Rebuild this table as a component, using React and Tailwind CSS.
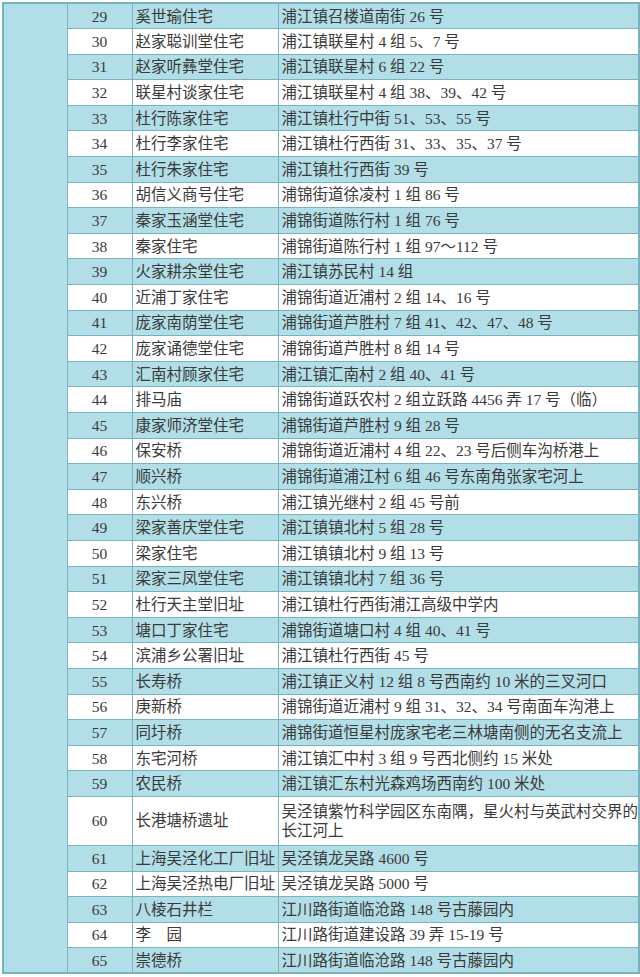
import React from "react";

const rows = [
  ["29", "奚世瑜住宅", "浦江镇召楼道南街 26 号"],
  ["30", "赵家聪训堂住宅", "浦江镇联星村 4 组 5、7 号"],
  ["31", "赵家听彝堂住宅", "浦江镇联星村 6 组 22 号"],
  ["32", "联星村谈家住宅", "浦江镇联星村 4 组 38、39、42 号"],
  ["33", "杜行陈家住宅", "浦江镇杜行中街 51、53、55 号"],
  ["34", "杜行李家住宅", "浦江镇杜行西街 31、33、35、37 号"],
  ["35", "杜行朱家住宅", "浦江镇杜行西街 39 号"],
  ["36", "胡信义商号住宅", "浦锦街道徐凌村 1 组 86 号"],
  ["37", "秦家玉涵堂住宅", "浦锦街道陈行村 1 组 76 号"],
  ["38", "秦家住宅", "浦锦街道陈行村 1 组 97～112 号"],
  ["39", "火家耕余堂住宅", "浦江镇苏民村 14 组"],
  ["40", "近浦丁家住宅", "浦锦街道近浦村 2 组 14、16 号"],
  ["41", "庞家南荫堂住宅", "浦锦街道芦胜村 7 组 41、42、47、48 号"],
  ["42", "庞家诵德堂住宅", "浦锦街道芦胜村 8 组 14 号"],
  ["43", "汇南村顾家住宅", "浦江镇汇南村 2 组 40、41 号"],
  ["44", "排马庙", "浦锦街道跃农村 2 组立跃路 4456 弄 17 号（临）"],
  ["45", "康家师济堂住宅", "浦锦街道芦胜村 9 组 28 号"],
  ["46", "保安桥", "浦锦街道近浦村 4 组 22、23 号后侧车沟桥港上"],
  ["47", "顺兴桥", "浦锦街道浦江村 6 组 46 号东南角张家宅河上"],
  ["48", "东兴桥", "浦江镇光继村 2 组 45 号前"],
  ["49", "梁家善庆堂住宅", "浦江镇镇北村 5 组 28 号"],
  ["50", "梁家住宅", "浦江镇镇北村 9 组 13 号"],
  ["51", "梁家三凤堂住宅", "浦江镇镇北村 7 组 36 号"],
  ["52", "杜行天主堂旧址", "浦江镇杜行西街浦江高级中学内"],
  ["53", "塘口丁家住宅", "浦锦街道塘口村 4 组 40、41 号"],
  ["54", "滨浦乡公署旧址", "浦江镇杜行西街 45 号"],
  ["55", "长寿桥", "浦江镇正义村 12 组 8 号西南约 10 米的三叉河口"],
  ["56", "庚新桥", "浦锦街道近浦村 9 组 31、32、34 号南面车沟港上"],
  ["57", "同圩桥", "浦锦街道恒星村庞家宅老三林塘南侧的无名支流上"],
  ["58", "东宅河桥", "浦江镇汇中村 3 组 9 号西北侧约 15 米处"],
  ["59", "农民桥", "浦江镇汇东村光森鸡场西南约 100 米处"],
  ["60", "长港塘桥遗址", "double"],
  ["61", "上海吴泾化工厂旧址", "吴泾镇龙吴路 4600 号"],
  ["62", "上海吴泾热电厂旧址", "吴泾镇龙吴路 5000 号"],
  ["63", "八棱石井栏", "江川路街道临沧路 148 号古藤园内"],
  ["64", "李　园", "江川路街道建设路 39 弄 15-19 号"],
  ["65", "崇德桥", "江川路街道临沧路 148 号古藤园内"],
];

export default function App() {
  return (
    <div
      className="w-[640px] h-[977px] bg-white pt-[2px] pl-[2px] overflow-hidden"
      style={{ fontFamily: '"Liberation Serif", "Noto Sans CJK SC", serif' }}
    >
      <table className="border-collapse table-fixed w-[636px] text-[15.5px] text-[#3a3a3a] leading-[19px] border-2 border-[#79b3c2]">
        <colgroup>
          <col className="w-[64px]" />
          <col className="w-[65px]" />
          <col className="w-[146px]" />
          <col className="w-[361px]" />
        </colgroup>
        <tbody>
          {rows.map((r, i) => {
            const blue = i % 2 === 0;
            const bg = blue ? "bg-[#b2dee7]" : "bg-white";
            const dbl = r[2] === "double";
            return (
              <tr key={r[0]} className={dbl ? "h-[49px]" : "h-[25.6px]"}>
                {i === 0 && (
                  <td rowSpan={rows.length} className="bg-[#b2dee7] border border-[#79b3c2] p-0" />
                )}
                <td className={`${bg} border border-[#79b3c2] text-center p-0 whitespace-nowrap`}>{r[0]}</td>
                <td className={`${bg} border border-[#79b3c2] pl-[3px] p-0 whitespace-nowrap`}>{r[1]}</td>
                <td className={`${bg} border border-[#79b3c2] pl-[3px] p-0 whitespace-nowrap`}>
                  {dbl ? (
                    <>
                      吴泾镇紫竹科学园区东南隅，星火村与英武村交界的
                      <br />
                      长江河上
                    </>
                  ) : (
                    r[2]
                  )}
                </td>
              </tr>
            );
          })}
        </tbody>
      </table>
    </div>
  );
}
